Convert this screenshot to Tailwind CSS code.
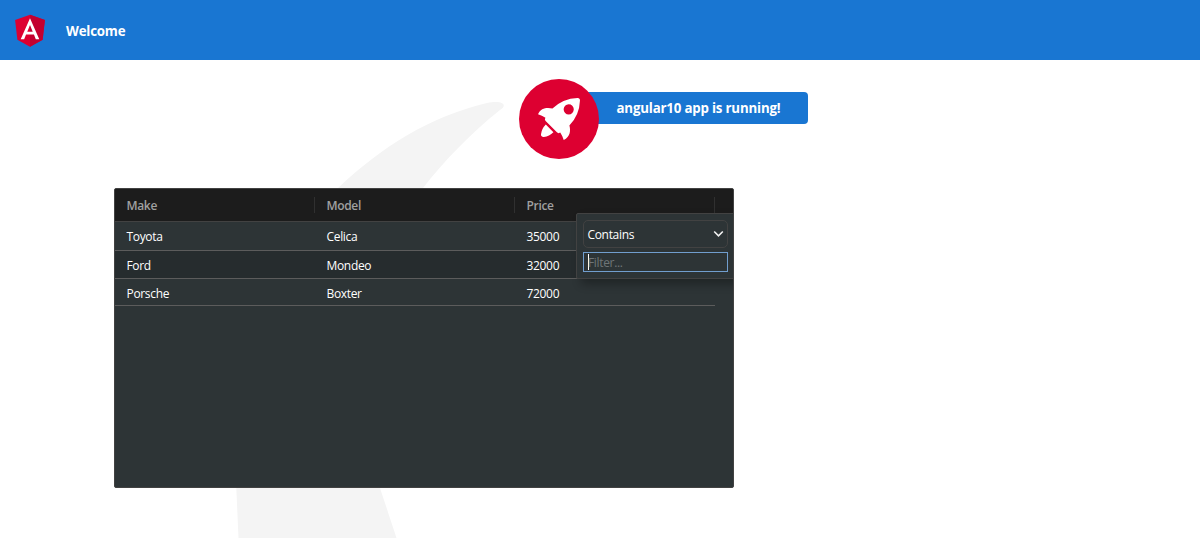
<!DOCTYPE html>
<html lang="en">
<head>
<meta charset="utf-8">
<title>Welcome</title>
<script src="https://cdn.jsdelivr.net/npm/@tailwindcss/browser@4"></script>
</head>
<body class="relative h-[538px] overflow-hidden bg-white font-['Open_Sans','Noto_Sans',sans-serif] text-[#333]">
<svg class="absolute left-0 top-0 -z-10" width="1200" height="538" viewBox="0 0 1200 538"><path fill="#f4f4f4" d="M238.500 538L236.300 488C236 360 270 250 338 188C383 146 429 117 487 103C501 100 509 104 500 110C471 133 445 160 423 188C350 290 350 400 380 488L396.500 538Z"/></svg>

<header class="flex h-[60px] items-center bg-[#1976d2] text-white">
  <svg class="ml-[10px]" width="40" height="40" viewBox="0 0 250 250"><path fill="#dd0031" d="M125 30L31.900 63.200 46.100 186.300 125 230 203.900 186.300 218.100 63.200z"/><path fill="#c3002f" d="M125 30V230L203.900 186.300 218.100 63.200z"/><path fill="#fff" d="M125 52.100L66.800 182.600H88.500L100.200 153.400H149.600L161.300 182.600H183zM142 135.400H108L125 94.500z"/></svg>
  <span class="ml-4 pt-[3px] text-[13.300px] font-bold tracking-[-0.200px]">Welcome</span>
</header>

<main>
  <div class="relative ml-[529px] mt-8 flex h-8 w-[279px] items-center rounded bg-[#1976d2] text-white">
    <svg class="absolute -left-[10px] -top-[13px]" width="80" height="80" viewBox="0 0 101.678 101.678">
      <circle cx="50.839" cy="50.839" r="50.839" fill="#dd0031"/>
      <g transform="translate(24.185 24.185)" fill="#fff">
        <path d="M3.4,42.615a3.084,3.084,0,0,0,3.553,3.553,21.419,21.419,0,0,0,12.215-6.107L9.511,30.4A21.419,21.419,0,0,0,3.4,42.615Z" transform="translate(.371 3.363)"/>
        <path d="M53.3,3.221A3.09,3.09,0,0,0,50.081,0,48.227,48.227,0,0,0,18.322,13.437c-6-1.666-14.991-1.221-18.322,7.218A33.892,33.892,0,0,1,9.439,25.1l-.333.666a3.013,3.013,0,0,0,.555,3.553L23.985,43.641a2.9,2.9,0,0,0,3.553.555l.666-.333A33.892,33.892,0,0,1,32.647,53.3c8.55-3.664,8.884-12.326,7.218-18.322A48.227,48.227,0,0,0,53.3,3.221ZM34.424,9.772a6.439,6.439,0,1,1,9.106,9.106,6.368,6.368,0,0,1-9.106,0A6.467,6.467,0,0,1,34.424,9.772Z"/>
      </g>
    </svg>
    <span class="ml-[87.500px] whitespace-nowrap pt-px text-[13.300px] font-bold tracking-[-0.190px]">angular10 app is running!</span>
  </div>

  <section class="relative ml-[114px] mt-16 h-[300px] w-[620px] overflow-hidden rounded-[2px] border border-[#424242] bg-[#2d3436] text-[12px] tracking-[-0.330px] text-white">
    <div class="flex h-[33px] items-center border-b border-[#424242] bg-[#1c1c1c] font-semibold text-[#a0a0a0]">
      <div class="flex h-4 w-[200px] items-center border-r border-[#303030] pl-[11.500px] pt-0.5">Make</div>
      <div class="flex h-4 w-[200px] items-center border-r border-[#303030] pl-[11.500px] pt-0.5">Model</div>
      <div class="flex h-4 w-[200px] items-center border-r border-[#303030] pl-[11.500px] pt-0.5">Price</div>
    </div>
    <div class="flex h-[29px] w-[600px] items-center border-b border-[#5c5c5c] pt-px">
      <div class="w-[200px] pl-[11.500px]">Toyota</div><div class="w-[200px] pl-[11.500px]">Celica</div><div class="w-[200px] pl-[11.500px]">35000</div>
    </div>
    <div class="flex h-[28px] w-[600px] items-center border-b border-[#5c5c5c] bg-[#262c2e] pt-[2px]">
      <div class="w-[200px] pl-[11.500px]">Ford</div><div class="w-[200px] pl-[11.500px]">Mondeo</div><div class="w-[200px] pl-[11.500px]">32000</div>
    </div>
    <div class="flex h-[27px] w-[600px] items-center border-b border-[#5c5c5c] pt-[4px]">
      <div class="w-[200px] pl-[11.500px]">Porsche</div><div class="w-[200px] pl-[11.500px]">Boxter</div><div class="w-[200px] pl-[11.500px]">72000</div>
    </div>

    <div class="absolute left-[461px] top-[24px] flex h-[66px] w-[160px] flex-col gap-1 rounded-[2px] border border-[#424242] bg-[#2d3436] pl-1.5 pt-1.5 shadow-[5px_5px_10px_rgba(0,0,0,0.3)]">
      <div class="flex h-[28px] w-[145px] items-center justify-between rounded-[5px] border border-[#424242] pl-[3.500px] pr-[3px]">
        <span class="pt-0.5">Contains</span>
        <svg width="11" height="8" viewBox="0 0 11 8" fill="none" stroke="#f0f0f0" stroke-width="1.600"><path d="M1.200 1.500L5.500 5.800L9.800 1.500"/></svg>
      </div>
      <div class="flex h-5 w-[145px] items-center border border-[#719ece] pl-1 text-[#6f7476]">
        <span class="h-4 w-px bg-white"></span><span class="-ml-px pt-0.5">Filter...</span>
      </div>
    </div>
  </section>
</main>
</body>
</html>
